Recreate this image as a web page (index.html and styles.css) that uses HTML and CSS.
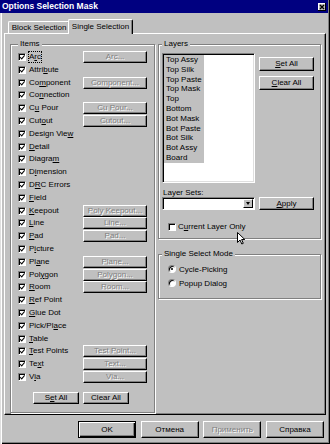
FILE: index.html
```html
<!DOCTYPE html>
<html lang="ru">
<head>
    <meta charset="UTF-8">
    <title>Options Selection Mask</title>
    <link rel="stylesheet" href="styles.css">
</head>
<body>

<div class="window">
    <div class="titlebar">
        <span class="title">Options Selection Mask</span>
        <span class="close">
            <svg width="8" height="8" viewBox="0 0 8 8"><path d="M2 2 L6 6 M6 2 L2 6" stroke="#000" stroke-width="1.4"/></svg>
        </span>
    </div>

    <div class="tabs">
        <div class="tab">Block Selection</div>
        <div class="tab active">Single Selection</div>
    </div>

    <div class="panel">
        <!-- Items -->
        <fieldset class="group items">
            <legend>Items</legend>
            <div class="item-list">
                <div class="row"><span class="item"><span class="cb on"></span><span class="lbl focus">A<u>r</u>c</span></span><button class="btn small" disabled>Arc...</button></div>
                <div class="row"><span class="item"><span class="cb on"></span><span class="lbl">Attri<u>b</u>ute</span></span></div>
                <div class="row"><span class="item"><span class="cb on"></span><span class="lbl">Co<u>m</u>ponent</span></span><button class="btn small" disabled>Component...</button></div>
                <div class="row"><span class="item"><span class="cb on"></span><span class="lbl">Co<u>n</u>nection</span></span></div>
                <div class="row"><span class="item"><span class="cb on"></span><span class="lbl">C<u>u</u> Pour</span></span><button class="btn small" disabled>Cu Pour...</button></div>
                <div class="row"><span class="item"><span class="cb on"></span><span class="lbl">Cut<u>o</u>ut</span></span><button class="btn small" disabled>Cutout...</button></div>
                <div class="row"><span class="item"><span class="cb on"></span><span class="lbl">Design Vie<u>w</u></span></span></div>
                <div class="row"><span class="item"><span class="cb on"></span><span class="lbl"><u>D</u>etail</span></span></div>
                <div class="row"><span class="item"><span class="cb on"></span><span class="lbl">Diagra<u>m</u></span></span></div>
                <div class="row"><span class="item"><span class="cb on"></span><span class="lbl">D<u>i</u>mension</span></span></div>
                <div class="row"><span class="item"><span class="cb on"></span><span class="lbl">D<u>R</u>C Errors</span></span></div>
                <div class="row"><span class="item"><span class="cb on"></span><span class="lbl"><u>F</u>ield</span></span></div>
                <div class="row"><span class="item"><span class="cb on"></span><span class="lbl"><u>K</u>eepout</span></span><button class="btn small" disabled>Poly Keepout...</button></div>
                <div class="row"><span class="item"><span class="cb on"></span><span class="lbl"><u>L</u>ine</span></span><button class="btn small" disabled>Line...</button></div>
                <div class="row"><span class="item"><span class="cb on"></span><span class="lbl"><u>P</u>ad</span></span><button class="btn small" disabled>Pad...</button></div>
                <div class="row"><span class="item"><span class="cb on"></span><span class="lbl">P<u>i</u>cture</span></span></div>
                <div class="row"><span class="item"><span class="cb on"></span><span class="lbl">Pl<u>a</u>ne</span></span><button class="btn small" disabled>Plane...</button></div>
                <div class="row"><span class="item"><span class="cb on"></span><span class="lbl">Pol<u>y</u>gon</span></span><button class="btn small" disabled>Polygon...</button></div>
                <div class="row"><span class="item"><span class="cb on"></span><span class="lbl"><u>R</u>oom</span></span><button class="btn small" disabled>Room...</button></div>
                <div class="row"><span class="item"><span class="cb on"></span><span class="lbl"><u>R</u>ef Point</span></span></div>
                <div class="row"><span class="item"><span class="cb on"></span><span class="lbl"><u>G</u>lue Dot</span></span></div>
                <div class="row"><span class="item"><span class="cb on"></span><span class="lbl">Pick/Pl<u>a</u>ce</span></span></div>
                <div class="row"><span class="item"><span class="cb on"></span><span class="lbl"><u>T</u>able</span></span></div>
                <div class="row"><span class="item"><span class="cb on"></span><span class="lbl"><u>T</u>est Points</span></span><button class="btn small" disabled>Test Point...</button></div>
                <div class="row"><span class="item"><span class="cb on"></span><span class="lbl">Te<u>x</u>t</span></span><button class="btn small" disabled>Text...</button></div>
                <div class="row"><span class="item"><span class="cb on"></span><span class="lbl">V<u>i</u>a</span></span><button class="btn small" disabled>Via...</button></div>
            </div>
            <div class="item-actions">
                <button class="btn act">S<u>e</u>t All</button>
                <button class="btn act">Clear All</button>
            </div>
        </fieldset>

        <div class="right-col">
            <!-- Layers -->
            <fieldset class="group layers">
                <legend>Layers</legend>
                <div class="layers-top">
                    <div class="listbox">
                        <div class="layer">Top Assy</div>
                        <div class="layer">Top Silk</div>
                        <div class="layer">Top Paste</div>
                        <div class="layer">Top Mask</div>
                        <div class="layer">Top</div>
                        <div class="layer">Bottom</div>
                        <div class="layer">Bot Mask</div>
                        <div class="layer">Bot Paste</div>
                        <div class="layer">Bot Silk</div>
                        <div class="layer">Bot Assy</div>
                        <div class="layer">Board</div>
                    </div>
                    <div class="layer-btns">
                        <button class="btn side"><u>S</u>et All</button>
                        <button class="btn side"><u>C</u>lear All</button>
                    </div>
                </div>
                <div class="sets-label">Layer Sets:</div>
                <div class="sets-row">
                    <div class="combo"><span class="combo-btn"><span class="arrow"></span></span></div>
                    <button class="btn side"><u>A</u>pply</button>
                </div>
                <div class="option"><span class="cb"></span><span class="lbl">C<u>u</u>rrent Layer Only</span></div>
            </fieldset>

            <!-- Single Select Mode -->
            <fieldset class="group mode">
                <legend>Single Select Mode</legend>
                <div class="radio-row"><span class="radio on"></span><span class="lbl">Cycle-Picking</span></div>
                <div class="radio-row"><span class="radio"></span><span class="lbl">Popup Dialog</span></div>
            </fieldset>
        </div>
    </div>

    <div class="footer">
        <button class="btn foot default">OK</button>
        <button class="btn foot">Отмена</button>
        <button class="btn foot" disabled>Применить</button>
        <button class="btn foot">Справка</button>
    </div>

    <svg class="cursor" width="9" height="13" viewBox="0 0 9 13">
        <path d="M0.5 0.5 L0.5 10.5 L3 8 L4.8 12 L6.3 11.3 L4.6 7.5 L7.8 7.5 Z" fill="#fff" stroke="#000" stroke-width="1" stroke-linejoin="miter"/>
    </svg>
</div>

</body>
</html>
```

FILE: styles.css
```css
body {
    margin: 0;
    font-family: "Liberation Sans", Arial, sans-serif;
    font-size: 8px;
    color: #000;
    background-color: #c0c0c0;
}
.window {
    position: relative;
    width: 330px;
    height: 444px;
    box-sizing: border-box;
    background-color: #c0c0c0;
    box-shadow: inset 1px 0 #dfdfdf, inset 2px 0 #fff, inset -1px -1px #000, inset -2px -2px #808080;
    overflow: hidden;
}
.titlebar {
    height: 13px;
    margin-right: 2px;
    background-color: #000080;
    color: #fff;
    display: flex;
    align-items: center;
    justify-content: space-between;
    padding: 0 2px 0 2px;
}
.title {
    font-weight: bold;
    font-size: 8.5px;
    line-height: 13px;
}
.close {
    width: 8px;
    height: 8px;
    background-color: #c0c0c0;
    box-shadow: inset -1px -1px #000, inset 1px 1px #fff;
    display: flex;
}
.tabs {
    display: flex;
    align-items: flex-end;
    height: 14px;
    margin: 6px 0 0 8px;
}
.tab {
    box-sizing: border-box;
    height: 12px;
    width: 62px;
    border-top: 1px solid #fff;
    border-left: 1px solid #fff;
    border-right: 1px solid #000;
    box-shadow: inset -1px 0 #808080;
    border-radius: 2px 2px 0 0;
    text-align: center;
    line-height: 11px;
    background-color: #c0c0c0;
}
.tab.active {
    position: relative;
    z-index: 1;
    height: 15px;
    width: 65px;
    margin-left: -2px;
    margin-bottom: -1px;
    line-height: 13px;
}
.panel {
    box-sizing: border-box;
    height: 382px;
    margin: 0 4px;
    border-top: 1px solid #fff;
    border-left: 1px solid #fff;
    border-right: 1px solid #000;
    border-bottom: 1px solid #000;
    box-shadow: inset -1px -1px #808080;
    padding: 5px 4px 1px 5px;
    display: flex;
    align-items: flex-start;
    gap: 3px;
}
.group {
    margin: 0;
    min-width: 0;
    border: 1px solid #808080;
    box-shadow: inset 1px 1px #fff, 1px 1px #fff;
}
.group legend {
    padding: 0 2px;
    line-height: 10px;
    background-color: #c0c0c0;
}
.lbl {
    white-space: nowrap;
}
.items {
    box-sizing: border-box;
    width: 145px;
    padding: 0 6px 8px 7px;
}
.item-list {
    margin-top: 1.6px;
}
.row {
    height: 12.8px;
    display: flex;
    align-items: center;
}
.item {
    width: 65px;
    display: flex;
    align-items: center;
    gap: 3px;
    line-height: 10px;
}
.focus {
    outline: 1px dotted #000;
}
.cb {
    position: relative;
    flex: none;
    width: 8px;
    height: 8px;
    box-sizing: border-box;
    border: 1px solid;
    border-color: #808080 #fff #fff #808080;
    box-shadow: inset 1px 1px #000;
    background-color: #fff;
}
.cb.on::after {
    content: "";
    position: absolute;
    left: 2px;
    top: 0;
    width: 1.5px;
    height: 3.5px;
    border: solid #000;
    border-width: 0 1.5px 1.5px 0;
    transform: rotate(40deg);
}
.btn {
    font-family: inherit;
    font-size: 8px;
    color: #000;
    background-color: #c0c0c0;
    border: 1px solid;
    border-color: #fff #000 #000 #fff;
    box-shadow: inset -1px -1px #808080;
    padding: 0;
    margin: 0;
    white-space: nowrap;
    overflow: hidden;
    line-height: 1;
}
.btn:disabled {
    color: #808080;
    text-shadow: 1px 1px #fff;
}
.btn.small {
    width: 64px;
    height: 12px;
}
.item-actions {
    display: flex;
    gap: 4px;
    margin-top: 8.6px;
    padding-left: 15px;
}
.btn.act {
    width: 46px;
    height: 12px;
}
.right-col {
    width: 163px;
    display: flex;
    flex-direction: column;
}
.layers {
    padding: 0 6px 6px 3px;
}
.layers-top {
    display: flex;
    gap: 4px;
    margin-top: 4px;
}
.listbox {
    box-sizing: border-box;
    width: 93px;
    height: 130px;
    background-color: #fff;
    border: 1px solid;
    border-color: #808080 #fff #fff #808080;
    box-shadow: inset 1px 1px #000, inset -1px -1px #dfdfdf;
    padding: 1px;
}
.layer {
    width: 38px;
    height: 9.8px;
    line-height: 9.8px;
    padding-left: 2px;
    background-color: #c0c0c0;
    white-space: nowrap;
}
.layer-btns {
    display: flex;
    flex-direction: column;
    gap: 5px;
    padding-top: 4px;
}
.btn.side {
    width: 55px;
    height: 14px;
}
.sets-label {
    margin-top: 5px;
    line-height: 9px;
    padding-left: 1px;
}
.sets-row {
    display: flex;
    gap: 4px;
}
.sets-row .btn.side {
    height: 13px;
}
.combo {
    box-sizing: border-box;
    width: 93px;
    height: 13px;
    background-color: #fff;
    border: 1px solid;
    border-color: #808080 #fff #fff #808080;
    box-shadow: inset 1px 1px #000;
    padding: 1px 1px 1px 0;
    display: flex;
    justify-content: flex-end;
}
.combo-btn {
    box-sizing: border-box;
    width: 10px;
    height: 100%;
    background-color: #c0c0c0;
    border: 1px solid;
    border-color: #fff #000 #000 #fff;
    display: flex;
    align-items: center;
    justify-content: center;
}
.arrow {
    width: 0;
    height: 0;
    border-left: 2.5px solid transparent;
    border-right: 2.5px solid transparent;
    border-top: 3px solid #000;
}
.option {
    display: flex;
    align-items: center;
    gap: 2px;
    margin: 12px 0 0 6px;
    line-height: 10px;
}
.mode {
    margin-top: 10px;
    padding: 3px 6px 8px 3px;
}
.radio-row {
    height: 14px;
    display: flex;
    align-items: center;
    gap: 2px;
    padding-left: 6px;
}
.radio {
    position: relative;
    flex: none;
    width: 8px;
    height: 8px;
    box-sizing: border-box;
    border-radius: 50%;
    border: 1px solid;
    border-color: #808080 #fff #fff #808080;
    box-shadow: inset 1px 1px #000;
    background-color: #fff;
    margin-right: 1px;
}
.radio.on::after {
    content: "";
    position: absolute;
    left: 2px;
    top: 2px;
    width: 2px;
    height: 2px;
    border-radius: 50%;
    background-color: #000;
}
.footer {
    display: flex;
    justify-content: flex-end;
    gap: 4.67px;
    margin-top: 6px;
    padding-right: 6px;
}
.btn.foot {
    width: 58px;
    height: 17px;
}
.btn.default {
    border-color: #000;
    box-shadow: inset 1px 1px #fff, inset -1px -1px #000, inset -2px -2px #808080;
}
.cursor {
    position: absolute;
    left: 237px;
    top: 232px;
}
```
